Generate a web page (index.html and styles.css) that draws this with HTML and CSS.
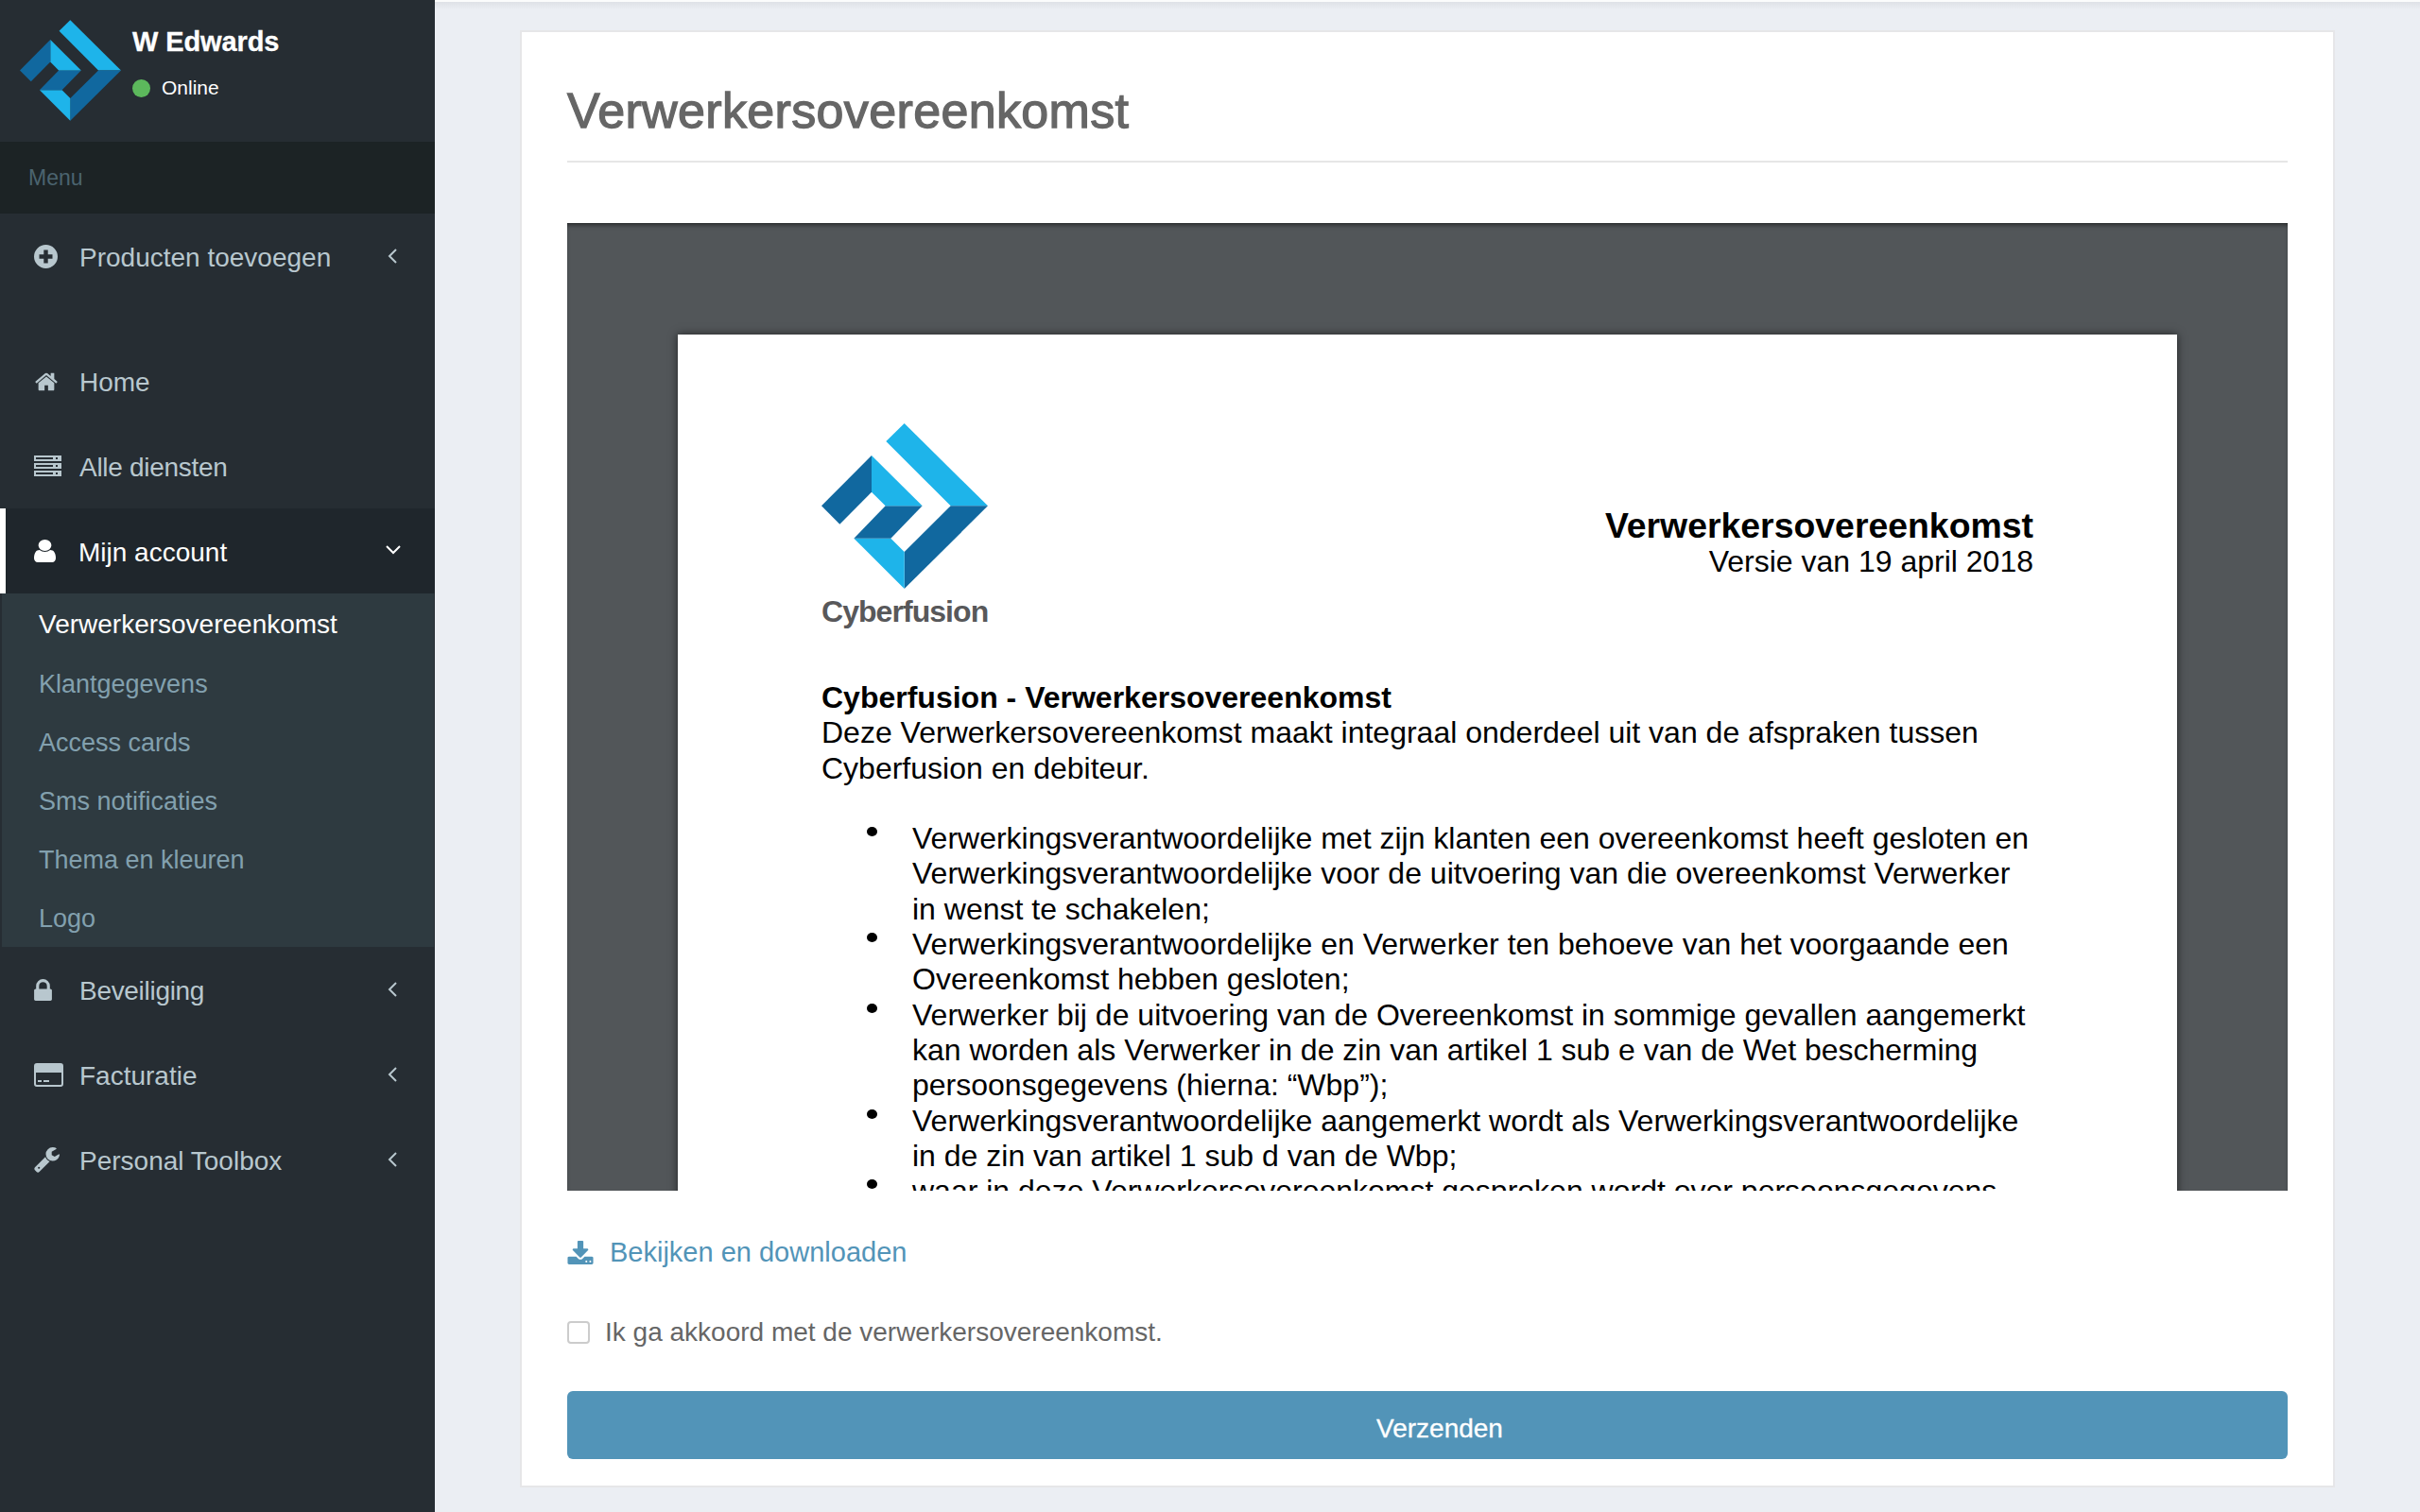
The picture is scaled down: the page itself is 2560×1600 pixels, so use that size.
FILE: index.html
```html
<!DOCTYPE html>
<html lang="nl">
<head>
<meta charset="utf-8">
<title>Verwerkersovereenkomst</title>
<link rel="stylesheet" href="styles.css">
</head>
<body>
<svg class="defs" aria-hidden="true">
  <symbol id="logo" viewBox="147 85 528 525">
    <path fill="#1eb4ea" d="M410 85 675 347H557L352 142Z"/>
    <path fill="#11689f" d="M557 347H675L410 610V493Z"/>
    <path fill="#1eb4ea" d="M250 450H367L410 493V610Z"/>
    <path fill="#11689f" d="M350 347H467L367 450H250Z"/>
    <path fill="#1eb4ea" d="M306 187 467 347H350L306 303Z"/>
    <path fill="#11689f" d="M306 187V303L205 405 147 347Z"/>
  </symbol>
</svg>
<aside class="sidebar">
  <div class="user">
    <svg class="user-logo"><use href="#logo"/></svg>
    <div class="user-info">
      <div class="user-name">W Edwards</div>
      <div class="user-status"><span class="dot"></span>Online</div>
    </div>
  </div>
  <div class="menu-label">Menu</div>
  <nav class="nav">
    <a class="row row-add">
      <svg class="ico ico-plus" viewBox="0 0 25 25"><path fill-rule="evenodd" d="M12.500 0a12.500 12.500 0 1 0 0 25 12.500 12.500 0 0 0 0-25ZM10.300 5.500h4.400v4.800h4.800v4.400h-4.800v4.800h-4.400v-4.800H5.500v-4.400h4.800Z"/></svg>
      <span class="label">Producten toevoegen</span>
      <svg class="chev" viewBox="0 0 10 16"><path d="M9 1 2 8l7 7"/></svg>
    </a>
    <a class="row">
      <svg class="ico ico-home" viewBox="0 192 1792 1344"><path d="M1472 992v480q0 26-19 45t-45 19h-384v-384h-256v384h-384q-26 0-45-19t-19-45v-480q0-1 .5-3t.5-3l575-474 575 474q1 2 1 6zm223-69l-62 74q-8 9-21 11h-3q-13 0-21-7l-692-577-692 577q-12 8-24 7-13-2-21-11l-62-74q-8-10-7-23.500t11-21.500l719-599q32-26 76-26t76 26l244 204v-195q0-14 9-23t23-9h192q14 0 23 9t9 23v408l219 182q10 8 11 21.500t-7 23.500z"/></svg>
      <span class="label">Home</span>
    </a>
    <a class="row">
      <svg class="ico ico-server" viewBox="0 0 29 22"><path fill-rule="evenodd" d="M0 0h29v6H0ZM2 2v2h18V2Zm21 0v2h2V2ZM0 8h29v6H0Zm2 2v2h18v-2Zm21 0v2h2v-2ZM0 16h29v6H0Zm2 2v2h18v-2Zm21 0v2h2v-2Z"/></svg>
      <span class="label label-tight">Alle diensten</span>
    </a>
    <a class="row row-open">
      <svg class="ico ico-user" viewBox="256 128 1280 1536" preserveAspectRatio="none"><path d="M1536 1399q0 109-62.500 187t-150.500 78h-854q-88 0-150.500-78t-62.500-187q0-85 8.500-160.500t31.500-152 58.500-131 94-89 134.500-34.500q131 128 313 128t313-128q76 0 134.500 34.500t94 89 58.500 131 31.500 152 8.500 160.500zm-256-887q0 159-112.500 271.500t-271.500 112.500-271.500-112.500-112.500-271.500 112.500-271.500 271.500-112.500 271.500 112.500 112.500 271.500z"/></svg>
      <span class="label">Mijn account</span>
      <svg class="chev-down" viewBox="0 0 16 10"><path d="M1 1l7 7 7-7"/></svg>
    </a>
    <ul class="sub">
      <li class="sub-item sub-active">Verwerkersovereenkomst</li>
      <li class="sub-item">Klantgegevens</li>
      <li class="sub-item">Access cards</li>
      <li class="sub-item">Sms notificaties</li>
      <li class="sub-item">Thema en kleuren</li>
      <li class="sub-item">Logo</li>
    </ul>
    <a class="row">
      <svg class="ico ico-lock" viewBox="320 128 1152 1408"><path d="M640 768h512v-192q0-106-75-181t-181-75-181 75-75 181v192zm832 96v576q0 40-28 68t-68 28h-960q-40 0-68-28t-28-68v-576q0-40 28-68t68-28h32v-192q0-184 132-316t316-132 316 132 132 316v192h32q40 0 68 28t28 68z"/></svg>
      <span class="label label-tight">Beveiliging</span>
      <svg class="chev" viewBox="0 0 10 16"><path d="M9 1 2 8l7 7"/></svg>
    </a>
    <a class="row">
      <svg class="ico ico-card" viewBox="0 0 31 25"><path fill-rule="evenodd" d="M3 0h25a3 3 0 0 1 3 3v19a3 3 0 0 1-3 3H3a3 3 0 0 1-3-3V3a3 3 0 0 1 3-3Zm-1 10v12a1 1 0 0 0 1 1h25a1 1 0 0 0 1-1V10Zm2 8h4v2H4Zm6 0h6v2h-6Z"/></svg>
      <span class="label">Facturatie</span>
      <svg class="chev" viewBox="0 0 10 16"><path d="M9 1 2 8l7 7"/></svg>
    </a>
    <a class="row">
      <svg class="ico ico-wrench" viewBox="64 128 1664 1664"><path d="M448 1472q0-26-19-45t-45-19-45 19-19 45 19 45 45 19 45-19 19-45zm644-420l-682 682q-37 37-90 37-52 0-91-37l-106-108q-38-36-38-90 0-53 38-91l681-681q39 98 114.500 173.500t173.500 114.500zm634-435q0 39-23 106-47 134-164.500 217.500t-258.500 83.500q-185 0-316.500-131.500t-131.500-316.500 131.500-316.500 316.500-131.500q58 0 121.500 16.500t107.500 46.500q16 11 16 28t-16 28l-293 169v224l193 107q5-3 79-48.500t135.500-81 70.500-35.500q15 0 23.500 10t8.500 25z"/></svg>
      <span class="label">Personal Toolbox</span>
      <svg class="chev" viewBox="0 0 10 16"><path d="M9 1 2 8l7 7"/></svg>
    </a>
  </nav>
</aside>
<main class="main">
  <section class="card">
    <h1 class="title">Verwerkersovereenkomst</h1>
    <div class="viewer">
      <article class="page">
        <header class="doc-head">
          <div class="doc-brand">
            <svg class="doc-logo"><use href="#logo"/></svg>
            <div class="doc-brand-name">Cyberfusion</div>
          </div>
          <div class="doc-title">
            <div class="doc-title-main">Verwerkersovereenkomst</div>
            <div class="doc-title-sub">Versie van 19 april 2018</div>
          </div>
        </header>
        <p class="doc-intro"><strong>Cyberfusion - Verwerkersovereenkomst</strong><br>Deze Verwerkersovereenkomst maakt integraal onderdeel uit van de afspraken tussen<br>Cyberfusion en debiteur.</p>
        <ul class="doc-list">
          <li>Verwerkingsverantwoordelijke met zijn klanten een overeenkomst heeft gesloten en<br>Verwerkingsverantwoordelijke voor de uitvoering van die overeenkomst Verwerker<br>in wenst te schakelen;</li>
          <li>Verwerkingsverantwoordelijke en Verwerker ten behoeve van het voorgaande een<br>Overeenkomst hebben gesloten;</li>
          <li>Verwerker bij de uitvoering van de Overeenkomst in sommige gevallen aangemerkt<br>kan worden als Verwerker in de zin van artikel 1 sub e van de Wet bescherming<br>persoonsgegevens (hierna: “Wbp”);</li>
          <li>Verwerkingsverantwoordelijke aangemerkt wordt als Verwerkingsverantwoordelijke<br>in de zin van artikel 1 sub d van de Wbp;</li>
          <li>waar in deze Verwerkersovereenkomst gesproken wordt over persoonsgegevens</li>
        </ul>
      </article>
    </div>
    <a class="download">
      <svg class="ico-download" viewBox="64 0 1664 1536"><path d="M1344 1344q0-26-19-45t-45-19-45 19-19 45 19 45 45 19 45-19 19-45zm256 0q0-26-19-45t-45-19-45 19-19 45 19 45 45 19 45-19 19-45zm128-224v320q0 40-28 68t-68 28h-1472q-40 0-68-28t-28-68v-320q0-40 28-68t68-28h465l135 136q58 56 136 56t136-56l136-136h464q40 0 68 28t28 68zm-325-569q17 41-14 70l-448 448q-18 19-45 19t-45-19l-448-448q-31-29-14-70 17-39 59-39h256v-448q0-26 19-45t45-19h256q26 0 45 19t19 45v448h256q42 0 59 39z"/></svg>
      <span>Bekijken en downloaden</span>
    </a>
    <label class="agree"><span class="box"></span>Ik ga akkoord met de verwerkersovereenkomst.</label>
    <button class="submit" type="button">Verzenden</button>
  </section>
</main>
</body>
</html>
```
FILE: styles.css
```css
* { box-sizing: border-box; }
html, body { margin: 0; height: 100%; }
body {
  display: flex;
  height: 1600px;
  overflow: hidden;
  font-family: "Liberation Sans", Arial, sans-serif;
  background: #ebeef3;
}
.defs { position: absolute; width: 0; height: 0; }

/* sidebar */
.sidebar { width: 460px; flex: none; background: #262d33; color: #b8c7ce; }
.user { height: 150px; display: flex; padding: 21px 0 0 21px; gap: 12px; }
.user-logo { width: 107px; height: 107px; }
.user-info { color: #fff; padding-top: 6px; }
.user-name { font-size: 29px; font-weight: 700; line-height: 34px; letter-spacing: -.1px; -webkit-text-stroke: .3px #fff; }
.user-status { display: flex; align-items: center; font-size: 21px; line-height: 30px; margin-top: 17px; }
.dot { width: 19px; height: 19px; border-radius: 50%; background: #5cb85c; margin-right: 12px; }
.menu-label { height: 76px; background: #1c2325; color: #4b646f; font-size: 23px; line-height: 76px; padding-left: 30px; }
.nav { display: flex; flex-direction: column; }
.row { height: 90px; display: flex; align-items: center; padding-left: 36px; font-size: 28px; }
.row-add { margin-bottom: 42px; }
.row-open { background: #1f262c; color: #fff; border-left: 6px solid #fff; padding-left: 30px; }
.ico { fill: #b8c7ce; flex: none; }
.label { flex: none; padding-top: 3px; }
.label-tight { letter-spacing: -.3px; }
.ico-plus { width: 25px; height: 25px; margin-right: 23px; }
.ico-home { width: 26px; height: 21px; margin-right: 22px; }
.ico-server { width: 29px; height: 22px; margin-right: 19px; }
.ico-user { width: 23px; height: 24px; margin-right: 24px; fill: #fff; }
.ico-lock { width: 19px; height: 23px; margin-right: 29px; }
.ico-card { width: 31px; height: 25px; margin-right: 17px; }
.ico-wrench { width: 27px; height: 27px; margin-right: 21px; }
.chev { width: 10px; height: 16px; margin-left: auto; margin-right: 40px; fill: none; stroke: #b8c7ce; stroke-width: 2; }
.chev-down { width: 16px; height: 10px; margin-left: auto; margin-right: 36px; margin-bottom: 3px; fill: none; stroke: #fff; stroke-width: 2; }
.sub { list-style: none; margin: 0 1px 0 2px; padding: 0; background: #2e3a40; font-size: 27px; color: #82a0ae; }
.sub-item { height: 62px; line-height: 64px; padding-left: 39px; }
.sub-active { height: 64px; line-height: 66px; font-size: 28px; color: #fff; }

/* main */
.main {
  flex: 1;
  min-width: 0;
  border-top: 2px solid #fbfcfc;
  background: linear-gradient(#dfe2e7, #ebeef3 8px);
}
.card {
  width: 1920px;
  height: 1542px;
  margin: 30px 0 0 90px;
  padding: 53px 48px 28px;
  background: #fff;
  border: 2px solid #e6e6e8;
  display: flex;
  flex-direction: column;
}
.title {
  margin: 0 0 64px;
  padding-bottom: 23px;
  height: 85px;
  border-bottom: 2px solid #e6e6e6;
  font-size: 52px;
  line-height: 60px;
  font-weight: 400;
  letter-spacing: .35px;
  color: #666;
  -webkit-text-stroke: 1.300px #666;
}
.viewer {
  height: 1024px;
  flex: none;
  background: #525659;
  box-shadow: inset 0 4px 5px -2px rgba(0,0,0,.55);
  overflow: hidden;
  padding: 118px 117px 0;
}
.page {
  background: #fff;
  height: 1200px;
  padding: 94px 152px 0;
  box-shadow: 0 0 9px rgba(0,0,0,.6);
  color: #000;
  font-size: 32px;
  line-height: 37.300px;
  white-space: nowrap;
}
.doc-head { display: flex; justify-content: space-between; height: 272px; }
.doc-logo { display: block; width: 176px; height: 175px; }
.doc-brand-name { font-size: 32px; font-weight: 700; color: #58585a; line-height: 36px; margin-top: 6px; letter-spacing: -.95px; }
.doc-title { text-align: right; padding-top: 89px; }
.doc-title-main { font-size: 37.400px; font-weight: 700; line-height: 38px; }
.doc-title-sub { font-size: 32px; line-height: 38px; }
.doc-intro { margin: 0 0 37.300px; }
.doc-list { list-style: none; margin: 0; padding: 0 0 0 96px; }
.doc-list li { position: relative; }
.doc-list li::before {
  content: "";
  position: absolute;
  left: -48px;
  top: 6px;
  width: 11px;
  height: 10px;
  border-radius: 50%;
  background: #000;
}

.download { display: flex; align-items: center; height: 40px; margin-top: 45px; font-size: 29px; color: #5294b8; }
.ico-download { width: 28px; height: 25px; fill: #5294b8; margin-right: 17px; }
.agree { display: flex; align-items: center; height: 40px; margin-top: 45px; font-size: 28px; color: #666; }
.box { width: 24px; height: 24px; border: 2px solid #ccc; border-radius: 4px; background: #fff; margin-right: 16px; }
.submit {
  height: 72px;
  flex: none;
  margin-top: auto;
  padding: 8px 0 0 26px;
  border: 0;
  border-radius: 6px;
  background: #5294b8;
  color: #fff;
  font-family: inherit;
  font-size: 28px;
  -webkit-text-stroke: .3px #fff;
}
```
